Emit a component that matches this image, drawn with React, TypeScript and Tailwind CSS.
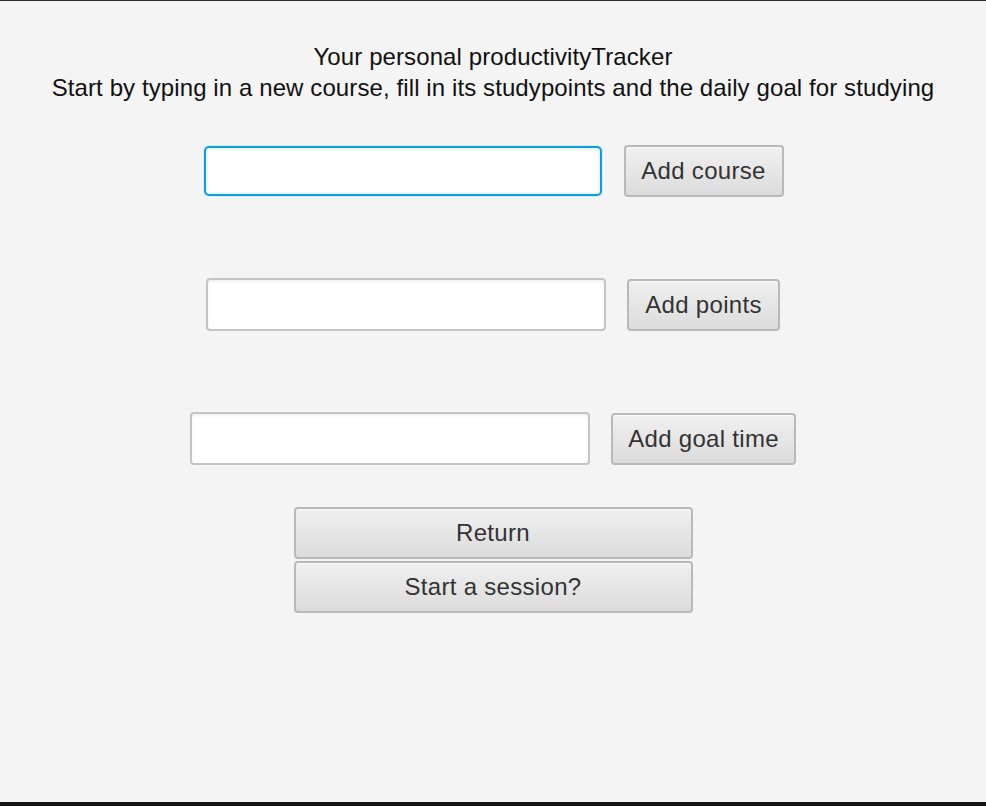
import React from "react";

const font = { fontFamily: '"Liberation Sans", Arial, sans-serif' };

function FxButton({ label, className = "" }: { label: string; className?: string }) {
  return (
    <button
      type="button"
      className={`h-[52px] rounded-[4px] border-2 border-[#b9b9b9] bg-gradient-to-b from-[#f0f0f0] to-[#dcdcdc] text-[24px] tracking-[0.3px] text-[#333333] shadow-[inset_0_1px_0_#fafafa] ${className}`}
    >
      {label}
    </button>
  );
}

function FxRow({ label, buttonWidth, focused }: { label: string; buttonWidth: string; focused?: boolean }) {
  return (
    <div className="flex items-center justify-center gap-[21px]">
      {focused ? (
        <div className="h-[52px] w-[400px] rounded-[6px] bg-[#d6eef8] p-[1px]">
          <div className="h-full w-full rounded-[5px] border-2 border-[#0a9fd6] bg-[#e9f6fb] p-[2px]">
            <div className="h-full w-full rounded-[2px] bg-white" />
          </div>
        </div>
      ) : (
        <input
          type="text"
          className="h-[53px] w-[400px] rounded-[4px] border-2 border-[#c4c4c4] bg-white shadow-[inset_0_2px_3px_rgba(0,0,0,0.06)] outline-none"
        />
      )}
      <FxButton label={label} className={buttonWidth} />
    </div>
  );
}

export default function App() {
  return (
    <div
      style={font}
      className="flex h-[806px] w-[986px] flex-col overflow-hidden border-t border-[#2e2e2e] bg-[#f4f4f4]"
    >
      <div className="flex flex-1 flex-col items-center">
        <div className="mt-[40px] text-center text-[24px] leading-[31px] tracking-[0.1px] text-[#111111]">
          <p>Your personal productivityTracker</p>
          <p>Start by typing in a new course, fill in its studypoints and the daily goal for studying</p>
        </div>

        <div className="mt-[42px] flex flex-col gap-[81px]">
          <FxRow label="Add course" buttonWidth="w-[160px]" focused />
          <FxRow label="Add points" buttonWidth="w-[153px]" />
          <FxRow label="Add goal time" buttonWidth="w-[185px]" />
        </div>

        <div className="mt-[42px] flex flex-col gap-[2px]">
          <FxButton label="Return" className="w-[399px]" />
          <FxButton label="Start a session?" className="w-[399px]" />
        </div>
      </div>
      <div className="h-[4px] bg-[#141414]" />
    </div>
  );
}
